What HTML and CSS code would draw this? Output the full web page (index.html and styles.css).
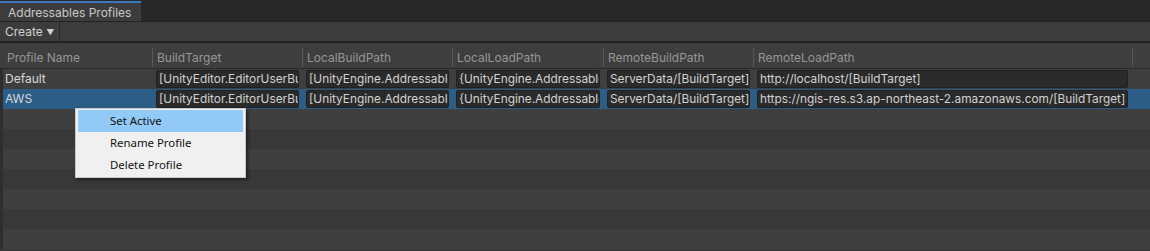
FILE: index.html
```html
<!DOCTYPE html>
<html lang="en">
<head>
    <meta charset="UTF-8" />
    <title>Addressables Profiles</title>
    <link rel="stylesheet" href="styles.css">
</head>
<body>

    <div class="tab-bar">
        <div class="tab">Addressables Profiles</div>
    </div>

    <div class="toolbar">
        <button class="create-btn">Create <span class="caret">&#9660;</span></button>
    </div>

    <div class="profiles">
        <div class="header-row">
            <div class="head-cell first">Profile Name</div>
            <div class="head-cell">BuildTarget</div>
            <div class="head-cell">LocalBuildPath</div>
            <div class="head-cell">LocalLoadPath</div>
            <div class="head-cell">RemoteBuildPath</div>
            <div class="head-cell">RemoteLoadPath</div>
            <div class="head-cell"></div>
        </div>

        <div class="rows">
            <div class="row">
                <div class="name">Default</div>
                <div class="cell"><div class="field">[UnityEditor.EditorUserBuildSettings.activeBuildTarget]</div></div>
                <div class="cell"><div class="field">[UnityEngine.AddressableAssets.Addressables.BuildPath]/[BuildTarget]</div></div>
                <div class="cell"><div class="field">{UnityEngine.AddressableAssets.Addressables.RuntimePath}/[BuildTarget]</div></div>
                <div class="cell"><div class="field">ServerData/[BuildTarget]</div></div>
                <div class="cell"><div class="field">http://localhost/[BuildTarget]</div></div>
            </div>
            <div class="row selected">
                <div class="name">AWS</div>
                <div class="cell"><div class="field">[UnityEditor.EditorUserBuildSettings.activeBuildTarget]</div></div>
                <div class="cell"><div class="field">[UnityEngine.AddressableAssets.Addressables.BuildPath]/[BuildTarget]</div></div>
                <div class="cell"><div class="field">{UnityEngine.AddressableAssets.Addressables.RuntimePath}/[BuildTarget]</div></div>
                <div class="cell"><div class="field">ServerData/[BuildTarget]</div></div>
                <div class="cell"><div class="field">https://ngis-res.s3.ap-northeast-2.amazonaws.com/[BuildTarget]</div></div>
            </div>
            <div class="row"></div>
            <div class="row"></div>
            <div class="row"></div>
            <div class="row"></div>
            <div class="row"></div>
            <div class="row"></div>
            <div class="row"></div>
        </div>

        <ul class="context-menu">
            <li class="active">Set Active</li>
            <li>Rename Profile</li>
            <li>Delete Profile</li>
        </ul>
    </div>

</body>
</html>
```

FILE: styles.css
```css
body {
    font-family: Inter, 'Noto Sans', sans-serif;
    font-size: 12px;
    background: #383838;
    color: #d2d2d2;
    margin: 0;
    overflow: hidden;
}
.tab-bar {
    height: 20px;
    padding-top: 1px;
    background: #282828;
    border-bottom: 1px solid #232323;
    display: flex;
}
.tab {
    width: 133px;
    height: 18px;
    padding-left: 8px;
    line-height: 19px;
    background: #3c3c3c;
    border-top: 2px solid #3a79bb;
    color: #c8c8c8;
}
.toolbar {
    height: 19px;
    background: #3c3c3c;
    border-bottom: 2px solid #232323;
    display: flex;
}
.create-btn {
    font: inherit;
    color: #d2d2d2;
    background: transparent;
    border: none;
    border-right: 1px solid #2a2a2a;
    width: 60px;
    padding: 0 0 0 5px;
    text-align: left;
    line-height: 19px;
}
.caret {
    font-size: 8px;
    position: relative;
    top: -1px;
}
.profiles {
    position: relative;
}
.header-row, .row {
    display: grid;
    grid-template-columns: 152px 150px 150px 151px 150px 379px 1fr;
}
.header-row {
    height: 26px;
    background: #3e3e3e;
    padding-top: 5px;
    box-sizing: border-box;
    border-bottom: 1px solid #2a2a2a;
}
.head-cell {
    height: 19px;
    line-height: 19px;
    border-left: 1px solid #585858;
    padding-left: 4px;
    color: #969696;
    white-space: nowrap;
    overflow: hidden;
}
.head-cell.first {
    border-left: none;
    padding-left: 7px;
}
.rows {
    border-left: 3px solid #2e2e2e;
}
.row {
    height: 20px;
    grid-template-columns: 149px 150px 150px 151px 150px 379px 1fr;
}
.row:nth-child(odd) {
    background: #3f3f3f;
}
.row.selected {
    background: #2c5d87;
}
.name {
    line-height: 20px;
    padding-left: 2px;
    color: #d8d8d8;
}
.cell {
    padding: 1px 3px 1px 4px;
}
.cell:last-child {
    padding-right: 4px;
}
.field {
    height: 16px;
    line-height: 16px;
    padding: 0 2px;
    font-size: 11.85px;
    background: #2a2a2a;
    border: 1px solid #212121;
    border-radius: 2px;
    white-space: nowrap;
    overflow: hidden;
    color: #d2d2d2;
}
.context-menu {
    position: absolute;
    left: 75px;
    top: 65px;
    width: 165px;
    margin: 0;
    padding: 1px 2px;
    list-style: none;
    background: #f0f0f0;
    border: 1px solid #c8c8c8;
    box-shadow: 2px 2px 3px rgba(0,0,0,0.45);
    font-family: 'Noto Sans', sans-serif;
    font-size: 11.4px;
    color: #111;
}
.context-menu li {
    height: 22px;
    line-height: 22px;
    padding-left: 32px;
}
.context-menu li.active {
    background: #91c9f7;
}
```
